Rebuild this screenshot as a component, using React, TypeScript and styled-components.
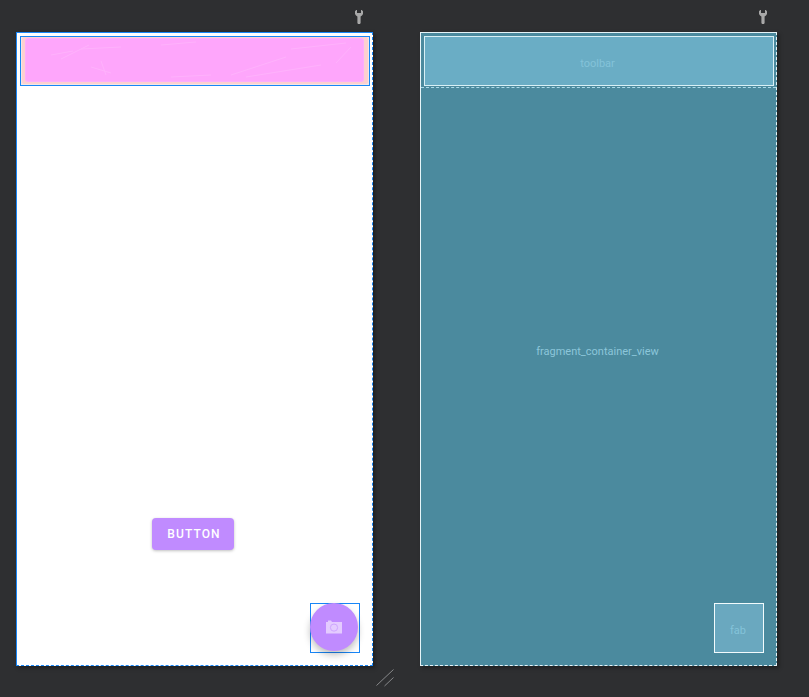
import styled, { createGlobalStyle } from "styled-components"

const GlobalStyle = createGlobalStyle`
  html, body {
    margin: 0;
    padding: 0;
    background: #2e2f31;
  }
  body {
    font-family: "Roboto", "Liberation Sans", sans-serif;
  }
`

const Canvas = styled.div`
  width: 809px;
  height: 697px;
  box-sizing: border-box;
  padding: 10px 0 0 16px;
  display: grid;
  grid-template-columns: 357px 357px;
  grid-template-rows: 22px 634px auto;
  column-gap: 47px;
  overflow: hidden;
`

const WrenchSlot = styled.div`
  display: flex;
  justify-content: flex-end;
  padding-right: 10px;
  height: 14px;
`

const Screen = styled.div`
  box-sizing: border-box;
  display: flex;
  flex-direction: column;
  box-shadow: 2px 2px 4px rgba(0, 0, 0, 0.35);
`

const DesignScreen = styled(Screen)`
  background: #fff;
  border-top: 1px solid #1886f7;
  border-left: 1px solid #1886f7;
  border-right: 1px dashed #1886f7;
  border-bottom: 1px dashed #1886f7;
`

const BlueprintScreen = styled(Screen)`
  background: #4b8a9e;
  border-top: 1px solid #e6f4f8;
  border-left: 1px solid #e6f4f8;
  border-right: 1px dashed #e6f4f8;
  border-bottom: 1px dashed #e6f4f8;
`

const ToolbarOutline = styled.div`
  box-sizing: border-box;
  height: 50px;
  margin: 3px 2px 0 3px;
  border: 1px solid #1886f7;
  display: flex;
`

const ToolbarArt = styled.svg`
  display: block;
  width: 100%;
  height: 100%;
`

const Body = styled.div`
  flex: 1;
  display: flex;
  flex-direction: column;
`

const ButtonRow = styled.div`
  margin-top: 432px;
  padding-left: 135px;
`

const PurpleButton = styled.button`
  display: block;
  width: 82px;
  height: 32px;
  padding: 0 0 0 2px;
  border: 0;
  border-radius: 4px;
  background: #c08bff;
  color: #fff;
  font-family: "Roboto", sans-serif;
  font-size: 12px;
  font-weight: 500;
  letter-spacing: 1.1px;
  box-shadow: 0 1px 3px rgba(0, 0, 0, 0.25);
`

const FabRow = styled.div`
  margin-top: 53px;
  padding-left: 293px;
`

const FabOutline = styled.div`
  box-sizing: border-box;
  width: 50px;
  height: 50px;
  border: 1px solid #1886f7;
`

const Fab = styled.div`
  width: 48px;
  height: 48px;
  margin: -1px 0 0 -1px;
  border-radius: 50%;
  background: #c08bff;
  display: flex;
  align-items: center;
  justify-content: center;
  box-shadow: 0 4px 7px rgba(0, 0, 0, 0.25);
`

const BlueToolbar = styled.div`
  height: 55px;
  box-sizing: border-box;
  padding: 3px 2px 0 3px;
  border-bottom: 1px dashed #a9d9e8;
`

const BlueToolbarInner = styled.div`
  box-sizing: border-box;
  height: 50px;
  padding: 4px 3px 0 0;
  border: 1px solid #d8f0f6;
  background: #6aadc5;
  display: flex;
  align-items: center;
  justify-content: center;
`

const BlueLabel = styled.span`
  color: #84c3d9;
  font-family: "Roboto", sans-serif;
  font-size: 11px;
`

const FragmentArea = styled.div`
  flex: 1;
  min-height: 0;
  display: flex;
  flex-direction: column;
`

const FragmentLabel = styled(BlueLabel)`
  align-self: center;
  margin: 257px 2px 0 0;
  color: #8bc6da;
`

const BlueFabRow = styled.div`
  margin-top: 245px;
  padding-left: 293px;
`

const BlueFab = styled.div`
  box-sizing: border-box;
  width: 50px;
  height: 50px;
  border: 1px solid #f2fbfd;
  background: #6aa8bf;
  display: flex;
  align-items: center;
  justify-content: center;
  padding: 4px 2px 0 0;
`

const HandleRow = styled.div`
  grid-column: 1 / 3;
  padding: 3px 0 0 360px;
`

const Wrench = () => (
  <svg width="8" height="14" viewBox="0 0 8 14">
    <path
      d="M1.2 0 L0 1.2 L0 4 L1 5.6 L2.4 6.4 L2.4 13 L3 14 L5 14 L5.6 13 L5.6 6.4 L7 5.6 L8 4 L8 1.2 L6.8 0 L6 0 L6 3 L2 3 L2 0 Z"
      fill="#a8a8a8"
    />
  </svg>
)

const Camera = () => (
  <svg width="16" height="14" viewBox="0 0 16 14">
    <path d="M0 2 H2 V0.5 H5 L6 2 H16 V13.5 H0 Z" fill="#e4cbff" />
    <circle cx="8" cy="7.6" r="3.6" fill="none" stroke="#cfa5ff" strokeWidth="1" />
  </svg>
)

const PinkStrip = () => (
  <ToolbarArt viewBox="0 0 348 48" preserveAspectRatio="none">
    <defs>
      <filter id="soft">
        <feGaussianBlur stdDeviation="0.7" />
      </filter>
    </defs>
    <rect width="348" height="48" fill="#f3e6e6" />
    <rect x="1" y="0" width="346" height="47" rx="2" fill="#fdd0d0" />
    <g filter="url(#soft)">
      <rect x="4" y="1" width="339" height="44" rx="3" fill="#fcaefc" />
      <rect x="5" y="2" width="337" height="42" rx="2" fill="#fea6fb" />
      <g stroke="#feb2fb" strokeWidth="1" fill="none">
        <path d="M30 18 L52 14 M40 22 L68 8 M70 30 L90 36 M60 12 L100 10" />
        <path d="M140 8 L175 5 M150 40 L190 38 M210 38 L265 20 M225 40 L300 28" />
        <path d="M270 12 L325 6 M315 26 L330 10 M80 24 L85 38" />
      </g>
    </g>
  </ToolbarArt>
)

const ResizeHandle = () => (
  <svg width="18" height="18" viewBox="0 0 18 18">
    <path d="M0.5 16.5 L17.5 0.5 M8.5 17 L17.5 8.5" stroke="#87888a" strokeWidth="1" fill="none" />
  </svg>
)

export default function App() {
  return (
    <>
      <GlobalStyle />
      <Canvas>
        <WrenchSlot>
          <Wrench />
        </WrenchSlot>
        <WrenchSlot>
          <Wrench />
        </WrenchSlot>

        <DesignScreen>
          <ToolbarOutline>
            <PinkStrip />
          </ToolbarOutline>
          <Body>
            <ButtonRow>
              <PurpleButton>BUTTON</PurpleButton>
            </ButtonRow>
            <FabRow>
              <FabOutline>
                <Fab>
                  <Camera />
                </Fab>
              </FabOutline>
            </FabRow>
          </Body>
        </DesignScreen>

        <BlueprintScreen>
          <BlueToolbar>
            <BlueToolbarInner>
              <BlueLabel>toolbar</BlueLabel>
            </BlueToolbarInner>
          </BlueToolbar>
          <FragmentArea>
            <FragmentLabel>fragment_container_view</FragmentLabel>
            <BlueFabRow>
              <BlueFab>
                <BlueLabel>fab</BlueLabel>
              </BlueFab>
            </BlueFabRow>
          </FragmentArea>
        </BlueprintScreen>

        <HandleRow>
          <ResizeHandle />
        </HandleRow>
      </Canvas>
    </>
  )
}
